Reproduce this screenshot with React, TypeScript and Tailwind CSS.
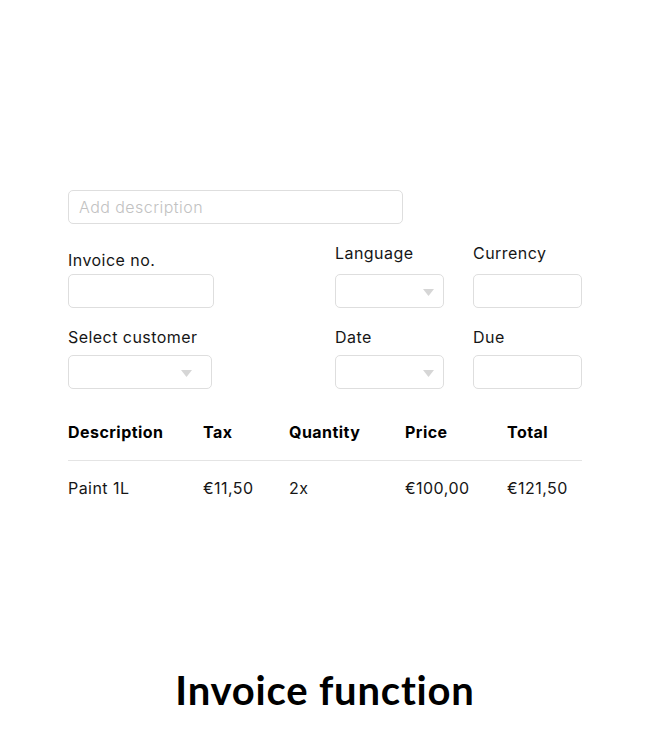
import React from "react";

function Caret({ right }: { right: string }) {
  return (
    <svg width="11" height="7" viewBox="0 0 11 7" className={`absolute ${right} top-[14px]`}>
      <path d="M0 0 L11 0 L5.5 7 Z" fill="#d6d6d6" />
    </svg>
  );
}

function Box({ w, caret }: { w: string; caret?: string }) {
  return (
    <div className={`relative h-[34px] ${w} rounded-[5px] border border-[#dedede] bg-white`}>
      {caret ? <Caret right={caret} /> : null}
    </div>
  );
}

export default function App() {
  const font = { fontFamily: "Inter, 'Noto Sans', sans-serif" };
  return (
    <div className="w-[650px] h-[750px] bg-white text-[#161616] tracking-[0.45px]" style={font}>
      <div className="pl-[68px] pt-[190px] w-[582px]">
        <div className="h-[34px] w-[335px] rounded-[5px] border border-[#dedede] flex items-center pl-[10px] text-[16px] text-[#c2c2c2] font-light">
          Add description
        </div>

        <div className="flex mt-[19px]">
          <div className="w-[267px] flex flex-col pt-[7px]">
            <div className="text-[16px] leading-5 mb-[4px]">Invoice no.</div>
            <Box w="w-[146px]" />
          </div>
          <div className="w-[138px] flex flex-col">
            <div className="text-[16px] leading-5 mb-[11px]">Language</div>
            <Box w="w-[109px]" caret="right-[9px]" />
          </div>
          <div className="w-[109px] flex flex-col">
            <div className="text-[16px] leading-5 mb-[11px]">Currency</div>
            <Box w="w-[109px]" />
          </div>
        </div>

        <div className="flex mt-[19px]">
          <div className="w-[267px] flex flex-col">
            <div className="text-[16px] leading-5 mb-[8px]">Select customer</div>
            <Box w="w-[144px]" caret="right-[19px]" />
          </div>
          <div className="w-[138px] flex flex-col">
            <div className="text-[16px] leading-5 mb-[8px]">Date</div>
            <Box w="w-[109px]" caret="right-[9px]" />
          </div>
          <div className="w-[109px] flex flex-col">
            <div className="text-[16px] leading-5 mb-[8px]">Due</div>
            <Box w="w-[109px]" />
          </div>
        </div>

        <div className="mt-[33px] flex text-[16px] leading-5 font-bold text-black pb-[18px] border-b border-[#e4e4e4]">
          <div className="w-[135px]">Description</div>
          <div className="w-[86px]">Tax</div>
          <div className="w-[116px]">Quantity</div>
          <div className="w-[102px]">Price</div>
          <div className="w-[75px]">Total</div>
        </div>
        <div className="flex text-[16px] leading-5 pt-[17px]">
          <div className="w-[135px]">Paint 1L</div>
          <div className="w-[86px]">€11,50</div>
          <div className="w-[116px]">2x</div>
          <div className="w-[102px]">€100,00</div>
          <div className="w-[75px]">€121,50</div>
        </div>
      </div>
      <div
        className="mt-[168px] text-center text-[40px] leading-[48px] font-bold text-black tracking-[0.8px]"
        style={{ fontFamily: "Lato, 'Noto Sans', sans-serif" }}
      >
        Invoice function
      </div>
    </div>
  );
}
